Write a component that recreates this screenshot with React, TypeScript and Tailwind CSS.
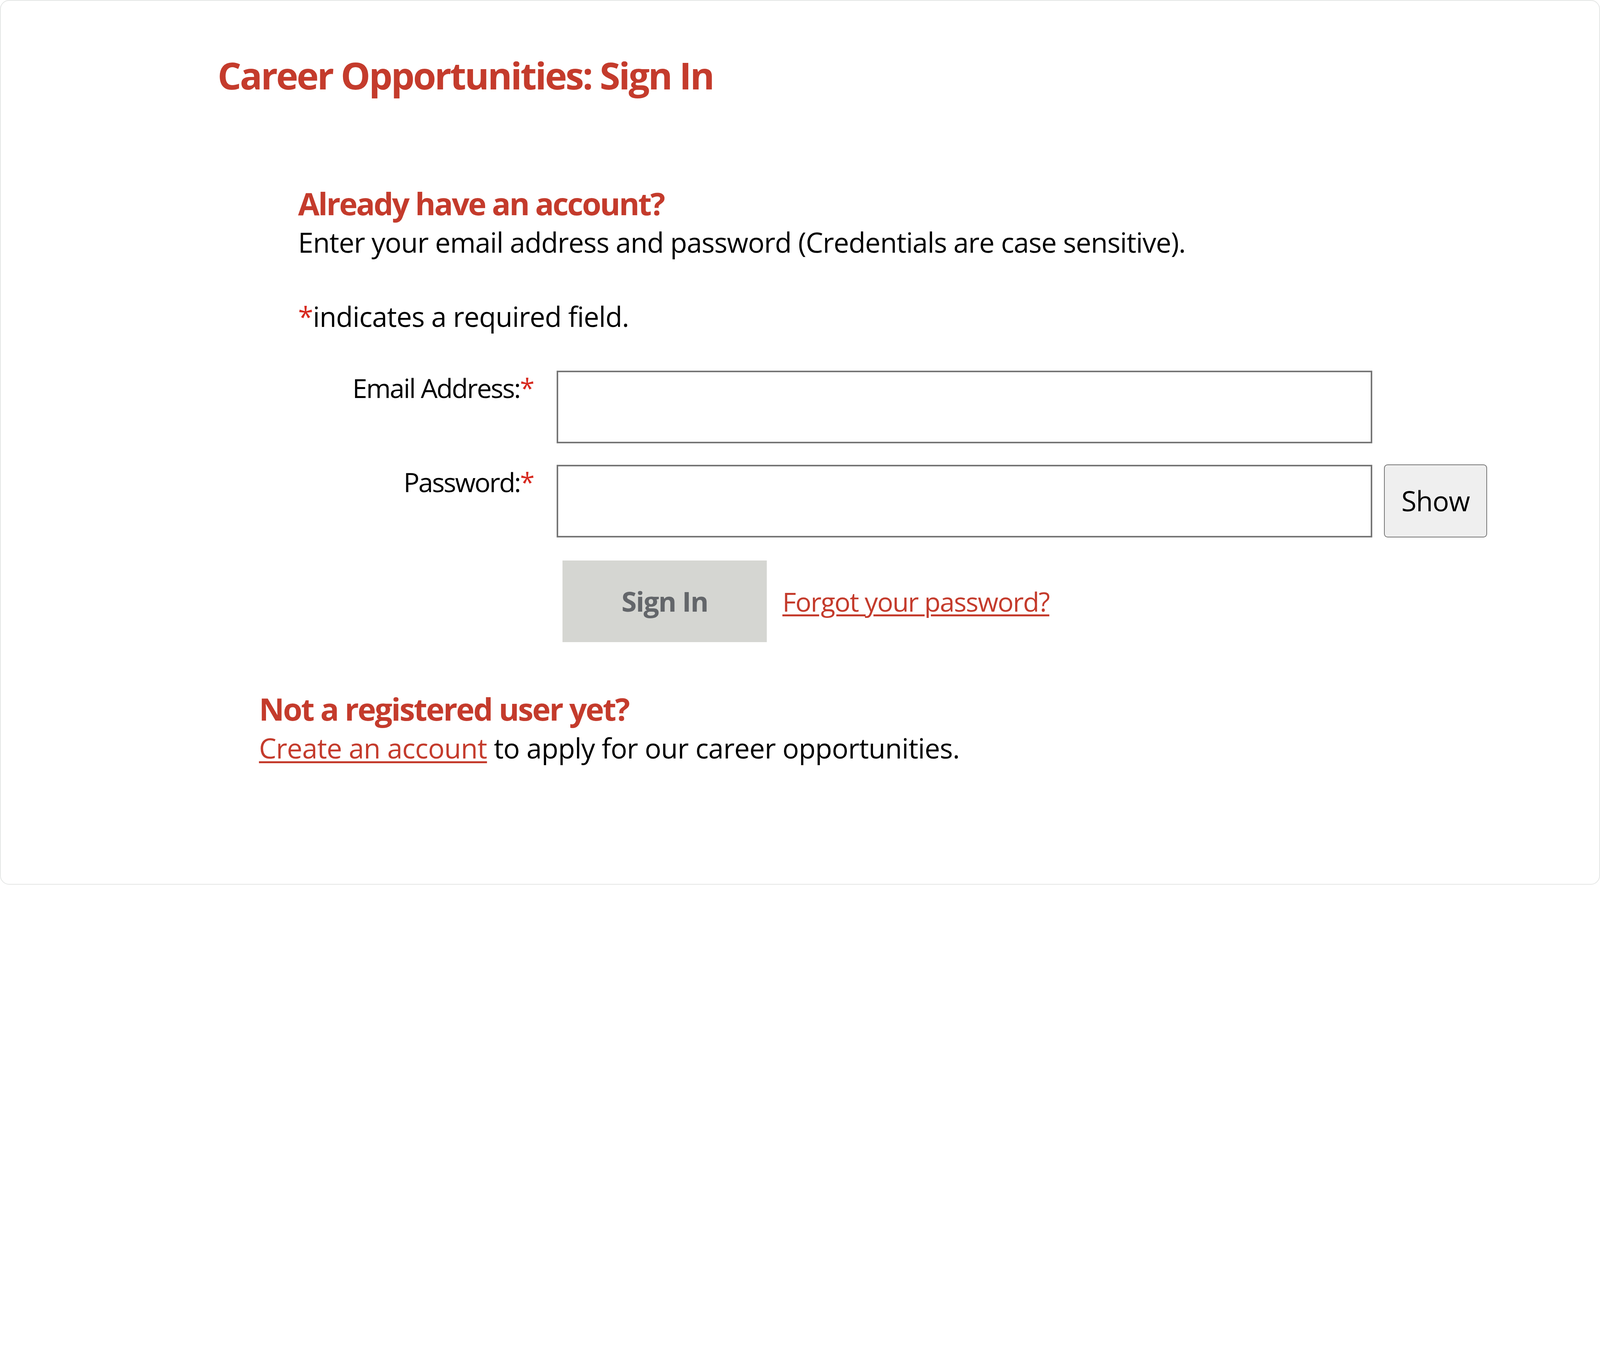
import React from "react";

export default function App() {
  return (
    <div className="w-screen min-h-screen bg-white font-['Open_Sans',sans-serif] text-black overflow-hidden">
      <div className="w-full aspect-[6264/3464] border-[2.62px] border-[#e4e6e5] rounded-[23.5px] pl-[555px] pt-[131.7px]">
        <h1 className="text-[95.47px] leading-[117.7px] font-bold text-[#c43b2c] tracking-[-3.92px] whitespace-nowrap">
          Career Opportunities: Sign In
        </h1>

        <div className="ml-[206px]">
          <h2 className="mt-[219.3px] text-[79.78px] leading-[98.1px] font-bold text-[#c43b2c] tracking-[-3.47px] whitespace-nowrap">
            Already have an account?
          </h2>
          <p className="mt-[6.15px] text-[70.62px] leading-[91.55px] tracking-[-1.11px] whitespace-nowrap">
            Enter your email address and password (Credentials are case sensitive).
          </p>
          <p className="mt-[98.7px] text-[70.62px] leading-[91.55px] tracking-[-0.9px] whitespace-nowrap">
            <span className="text-[#d7291f]">*</span>indicates a required field.
          </p>

          <div className="mt-[89.9px] flex items-start">
            <label className="w-[602.9px] text-right text-[68px] leading-[91.55px] tracking-[-2.62px] whitespace-nowrap">
              Email Address:<span className="text-[#d7291f]">*</span>
            </label>
            <input
              type="email"
              aria-label="Email Address"
              className="ml-[59.5px] mt-[2.9px] w-[2087.3px] h-[185.7px] border-4 border-[#767676] bg-white outline-none"
            />
          </div>

          <div className="mt-[52.7px] flex items-start">
            <label className="w-[602.9px] text-right text-[68px] leading-[91.55px] tracking-[-2.9px] whitespace-nowrap">
              Password:<span className="text-[#d7291f]">*</span>
            </label>
            <input
              type="password"
              aria-label="Password"
              className="ml-[59.5px] mt-[2.2px] w-[2087.3px] h-[186.4px] border-4 border-[#767676] bg-white outline-none"
            />
            <button className="ml-[30.1px] mt-[0.9px] w-[264.2px] h-[187.7px] border-[2.62px] border-[#767676] rounded-[9.2px] bg-[#efefef] text-[70.62px] leading-[91.55px] tracking-[-1.11px] text-black">
              Show
            </button>
          </div>

          <div className="mt-[58.9px] ml-[677.4px] flex items-center">
            <button className="w-[522.5px] h-[208.6px] bg-[#d5d6d2] text-[70.62px] leading-[91.55px] font-bold tracking-[-1.96px] text-[#63666a]">
              Sign In
            </button>
            <a
              href="#"
              className="ml-[40px] text-[68px] leading-[91.55px] tracking-[-1.85px] text-[#c43b2c] underline decoration-[length:4.6px] underline-offset-[6.5px] whitespace-nowrap"
            >
              Forgot your password?
            </a>
          </div>
        </div>

        <div className="ml-[105.9px]">
          <h2 className="mt-[121.4px] text-[79.78px] leading-[98.1px] font-bold text-[#c43b2c] tracking-[-3.14px] whitespace-nowrap">
            Not a registered user yet?
          </h2>
          <p className="mt-[6.15px] text-[70.62px] leading-[91.55px] tracking-[-0.8px] whitespace-nowrap">
            <a
              href="#"
              className="text-[#c43b2c] underline decoration-[length:4.6px] underline-offset-[6.5px]"
            >
              Create an account
            </a>{" "}
            to apply for our career opportunities.
          </p>
        </div>
      </div>
    </div>
  );
}
